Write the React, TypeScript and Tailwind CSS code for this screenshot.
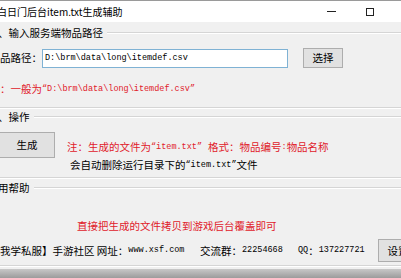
const cjk = { fontFamily: '"Noto Sans CJK SC", "Microsoft YaHei", sans-serif' };
const mono = { fontFamily: '"Liberation Mono", "Noto Sans CJK SC", monospace' };

const GroupTitle = ({ text }: { text: string }) => (
  <div className="flex items-center h-[14px] shrink-0">
    <span className="text-[10.5px] leading-[14px] whitespace-nowrap -ml-[2px]">{text}</span>
    <div className="flex-1 ml-[4px] h-[2px] border-t border-[#d5d5d5] border-b border-b-white" />
  </div>
);

const GroupEnd = () => (
  <div className="h-[2px] shrink-0 border-t border-[#d5d5d5] border-b border-b-white" />
);

const Btn = ({ label, className }: { label: string; className: string }) => (
  <button
    className={`bg-[#e1e1e1] border border-[#adadad] text-[10.5px] flex items-center justify-center shrink-0 ${className}`}
  >
    {label}
  </button>
);

const Mono = ({ children }: { children: string }) => (
  <span style={mono} className="text-[8.5px]">
    {children}
  </span>
);

export default function App() {
  return (
    <div
      style={cjk}
      className="w-[401px] h-[278px] overflow-hidden bg-[#f0f0f0] flex flex-col text-black"
    >
      {/* title bar */}
      <div className="h-[22px] bg-white flex items-center border-t border-[#9a9a9a] shrink-0">
        <span className="text-[10px] whitespace-nowrap -ml-[3px]">白日门后台item.txt生成辅助</span>
        <div className="flex-1" />
        <span className="w-[9px] h-px bg-[#222]" />
        <span className="ml-[30px] w-[8px] h-[8px] border border-[#222]" />
        <span className="w-[27px] shrink-0" />
      </div>

      {/* group 1 */}
      <div className="mt-[4px]">
        <GroupTitle text="、输入服务端物品路径" />
      </div>
      <div className="mt-[8px] flex items-center h-[20px] shrink-0">
        <span className="w-[42px] shrink-0 text-[10.5px] whitespace-nowrap">品路径：</span>
        <div className="w-[246px] shrink-0 h-[19px] bg-white border border-[#7fb2d4] flex items-center pl-[2px]">
          <Mono>D:\brm\data\long\itemdef.csv</Mono>
        </div>
        <Btn label="选择" className="ml-[15px] w-[40px] h-[20px]" />
      </div>
      <div className="mt-[14px] h-[14px] flex items-center text-[#e0202a] text-[10.5px] whitespace-nowrap shrink-0">
        <span>：一般为</span>
        <Mono>“D:\brm\data\long\itemdef.csv”</Mono>
      </div>
      <div className="mt-[11px]">
        <GroupEnd />
      </div>

      {/* group 2 */}
      <div className="mt-[1px]">
        <GroupTitle text="、操作" />
      </div>
      <div className="mt-[8px] flex shrink-0">
        <Btn label="生成" className="-ml-[1px] w-[56px] h-[26px]" />
        <div className="ml-[12px] mt-[8px] flex flex-col gap-[4px]">
          <div className="h-[14px] flex items-center text-[#e0202a] text-[10.5px] whitespace-nowrap">
            <span>注：生成的文件为</span>
            <Mono>“item.txt”</Mono>
            <span className="ml-[6px]">格式：物品编号</span>
            <Mono>:</Mono>
            <span>物品名称</span>
          </div>
          <div className="h-[14px] flex items-center text-[10.5px] whitespace-nowrap ml-[3px]">
            <span>会自动删除运行目录下的</span>
            <Mono>“item.txt”</Mono>
            <span>文件</span>
          </div>
        </div>
      </div>
      <div className="mt-[5px]">
        <GroupEnd />
      </div>

      {/* group 3 */}
      <div className="mt-[2px]">
        <GroupTitle text="用帮助" />
      </div>
      <div className="mt-[24px] h-[14px] pl-[77px] text-[#e0202a] text-[10.5px] leading-[14px] whitespace-nowrap shrink-0">
        直接把生成的文件拷贝到游戏后台覆盖即可
      </div>

      {/* footer */}
      <div className="mt-[6px] h-[23px] flex items-center text-[10.5px] whitespace-nowrap shrink-0">
        <div className="w-[200px] shrink-0 flex items-center">
          <span>我学私服】手游社区 网址：</span>
          <Mono>www.xsf.com</Mono>
        </div>
        <div className="w-[98px] shrink-0 flex items-center">
          <span>交流群：</span>
          <Mono>22254668</Mono>
        </div>
        <div className="w-[80px] shrink-0 flex items-center">
          <Mono>QQ</Mono>
          <span>：</span>
          <Mono>137227721</Mono>
        </div>
        <Btn label="设置" className="w-[40px] h-[23px]" />
      </div>
      <div className="mt-[3px]">
        <GroupEnd />
      </div>
      <div className="mt-[2px] flex-1 bg-gradient-to-b from-[#c8c8c8] to-[#9c9c9c]" />
    </div>
  );
}
